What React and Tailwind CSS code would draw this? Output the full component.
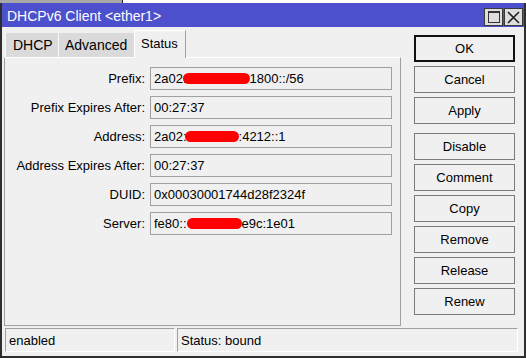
import React from 'react';

function Field({ children, blob }) {
  return (
    <div className="relative h-[23px] w-[242px] border border-[#a0a0a0] flex items-center pl-[3px] whitespace-nowrap overflow-hidden">
      {children}
      {blob}
    </div>
  );
}

function Row({ label, children, blob }) {
  return (
    <div className="flex items-center gap-[5px]">
      <div className="w-[140px] text-right whitespace-nowrap">{label}</div>
      <Field blob={blob}>{children}</Field>
    </div>
  );
}

function Btn({ children, primary, extra = '' }) {
  return (
    <div
      className={
        'h-[27px] w-[101px] flex items-center justify-center bg-[#f0f0f0] ' +
        (primary ? 'border-2 border-[#111111] ' : 'border border-[#7a7a7a] ') +
        extra
      }
    >
      {children}
    </div>
  );
}

export default function App() {
  return (
    <div className="w-[526px] h-[358px] bg-white overflow-hidden font-['Liberation_Sans',Arial,sans-serif] text-[13px] leading-[15px] text-black">
      <div className="flex h-[3px]">
        <div className="w-[122px] bg-[#a8a8a8]" />
        <div className="w-px bg-[#222222]" />
        <div className="flex-1 bg-white" />
      </div>
      <div className="h-[355px] border-x-2 border-b-2 border-[#2e2e2e] flex flex-col">
        {/* title bar */}
        <div className="h-[24px] bg-[#4c50cc] flex justify-between shrink-0">
          <div className="text-white text-[14px] leading-[16px] pl-[5px] pt-[5px]">DHCPv6 Client &lt;ether1&gt;</div>
          <div className="flex gap-px pt-[5px] pr-[1px]">
            <div className="w-[19px] h-[18px] bg-[#dedede] border border-[#3a3a3a] flex items-center justify-center">
              <div className="w-[12px] h-[12px] border border-[#333333] border-t-2" />
            </div>
            <div className="w-[19px] h-[18px] bg-[#dedede] border border-[#3a3a3a] flex items-center justify-center">
              <svg width="13" height="13" viewBox="0 0 13 13">
                <path d="M1 1 L12 12 M12 1 L1 12" stroke="#222" strokeWidth="1.6" />
              </svg>
            </div>
          </div>
        </div>
        {/* body */}
        <div className="flex-1 bg-[#f0f0f0] flex flex-col">
          <div className="flex h-[299px]">
            {/* left */}
            <div className="ml-[2px] w-[397px] pt-[3px] flex flex-col">
              <div className="flex h-[27px] ml-px relative z-10">
                <div className="mt-[3px] h-[24px] w-[53px] bg-[#dadada] border-l border-[#f8f8f8] flex items-center pl-[7px] text-[14px]">DHCP</div>
                <div className="mt-[3px] h-[24px] w-[76px] bg-[#dadada] border-l border-[#f8f8f8] flex items-center pl-[6px] text-[14px]">Advanced</div>
                <div className="h-[28px] w-[52px] bg-[#f0f0f0] border-l border-t border-r border-l-white border-t-white border-r-[#a0a0a0] flex items-center pl-[6px] pb-[2px]">Status</div>
              </div>
              <div className="h-[269px] border border-t-white border-l-[#a0a0a0] border-r-[#a0a0a0] border-b-[#a0a0a0] pt-[9px] flex flex-col gap-[6px]">
                <Row
                  label="Prefix:"
                  blob={<div className="absolute left-[32px] top-[5px] w-[67px] h-[11px] rounded-full bg-[#ff0000]" />}
                >
                  2a02:<span className="inline-block w-[63px]" />1800::/56
                </Row>
                <Row label="Prefix Expires After:">00:27:37</Row>
                <Row
                  label="Address:"
                  blob={<div className="absolute left-[34px] top-[5px] w-[54px] h-[11px] rounded-full bg-[#ff0000]" />}
                >
                  2a02:<span className="inline-block w-[52px]" />:4212::1
                </Row>
                <Row label="Address Expires After:">00:27:37</Row>
                <Row label="DUID:">0x00030001744d28f2324f</Row>
                <Row
                  label="Server:"
                  blob={<div className="absolute left-[36px] top-[5px] w-[55px] h-[11px] rounded-full bg-[#ff0000]" />}
                >
                  fe80::<span className="inline-block w-[55px]" />e9c:1e01
                </Row>
              </div>
            </div>
            {/* right buttons */}
            <div className="ml-[13px] pt-[8px] flex flex-col gap-[4px]">
              <Btn primary>OK</Btn>
              <Btn>Cancel</Btn>
              <Btn>Apply</Btn>
              <Btn extra="mt-[5px]">Disable</Btn>
              <Btn>Comment</Btn>
              <Btn>Copy</Btn>
              <Btn>Remove</Btn>
              <Btn>Release</Btn>
              <Btn>Renew</Btn>
            </div>
          </div>
          {/* status bar */}
          <div className="mt-[2px] ml-[3px] mr-[6px] flex gap-[2px] h-[24px]">
            <div className="w-[170px] border border-t-[#a0a0a0] border-l-[#a0a0a0] border-r-white border-b-white flex items-center pl-[3px]">enabled</div>
            <div className="flex-1 border border-t-[#a0a0a0] border-l-[#a0a0a0] border-r-white border-b-white flex items-center pl-[3px]">Status: bound</div>
          </div>
        </div>
      </div>
    </div>
  );
}
